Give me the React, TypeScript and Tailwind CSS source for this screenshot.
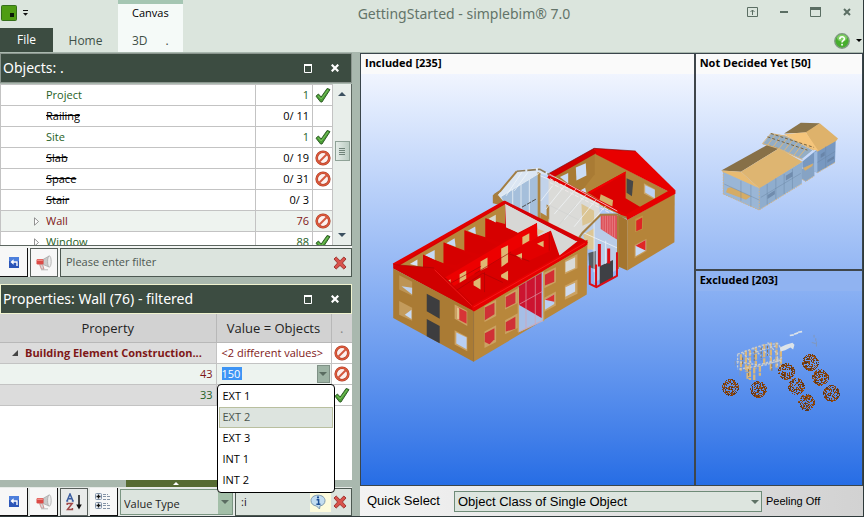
import React, { useState } from "react";

const ui = "font-['Open_Sans','Noto_Sans',sans-serif]";

/* ---------- icons ---------- */

function CheckIcon() {
  return (
    <svg viewBox="0 0 16 16" className="mx-auto block size-4" aria-label="Included" role="img">
      <path d="M1 9.2 3.4 7l2.8 3L12.2 1.4 15 2.6 7 15H5.6Z" fill="#4b9e35" stroke="#2f5c27" strokeWidth="1" strokeLinejoin="round" />
      <path d="M3.2 8.8 6.2 12 13 3" fill="none" stroke="#79c45c" strokeWidth="1" />
    </svg>
  );
}

function BanIcon() {
  return (
    <svg viewBox="0 0 16 16" className="mx-auto block size-4" aria-label="Excluded" role="img">
      <circle cx="8" cy="8" r="6.3" fill="#fdf1ee" stroke="#a83a22" strokeWidth="2.6" />
      <circle cx="8" cy="8" r="6.3" fill="none" stroke="#dd5a3d" strokeWidth="1.6" />
      <path d="m4 12 8-8" stroke="#d3583e" strokeWidth="2" />
    </svg>
  );
}

function RedX() {
  return (
    <svg viewBox="0 0 14 14" className="block size-3.5" aria-hidden="true">
      <path d="M1 3 3.2 1 7 4.8 10.8 1 13 3 9.4 7l3.6 4-2.2 2L7 9.4 3.2 13 1 11l3.6-4Z" fill="#d9534c" stroke="#a03631" strokeWidth="1" strokeLinejoin="round" />
    </svg>
  );
}

function BackIcon() {
  return (
    <svg viewBox="0 0 10 11" className="block h-[11px] w-2.5" aria-hidden="true">
      <rect width="10" height="11" fill="#2c55b8" />
      <rect x="0" y="0" width="10" height="4" fill="#4d7fdc" />
      <path d="M8 9V5H4" fill="none" stroke="#fff" strokeWidth="1.4" />
      <path d="M1.4 5 4.6 2.2v5.6Z" fill="#fff" />
    </svg>
  );
}

function Megaphone() {
  return (
    <svg viewBox="0 0 16 16" className="block size-4" aria-hidden="true">
      <path d="M7 4.5 13 1v11L7 9.5Z" fill="#c9c9c9" stroke="#9a9a9a" strokeWidth=".6" />
      <ellipse cx="13.4" cy="6.5" rx="1.8" ry="5.6" fill="#ededed" stroke="#a2a2a2" strokeWidth=".7" />
      <rect x=".5" y="4" width="7" height="5.6" rx="1.4" fill="#dc4a46" />
      <rect x="1" y="4.4" width="6" height="1.6" rx=".8" fill="#f08a84" />
      <path d="M3.6 9.6h3l1.4 4.6H5.4Z" fill="#d8d8d8" stroke="#c0605c" strokeWidth=".6" />
      <path d="M5 14.8h7" stroke="#b9b9b9" strokeWidth="1" />
    </svg>
  );
}

function SortIcon() {
  return (
    <svg viewBox="0 0 16 18" className="block h-[18px] w-4" aria-hidden="true">
      <path d="M1 8 4 1l3 7M2 5.800h4M.2 8h2M5.800 8h2" fill="none" stroke="#3b5da0" strokeWidth="1.5" />
      <path d="M1.2 12v-1.600h5L1.400 16.600h5V15" fill="none" stroke="#a04848" strokeWidth="1.5" />
      <path d="M13 2v11" stroke="#111" strokeWidth="1.500" />
      <path d="M10.200 11.500h5.600L13 16.400Z" fill="#111" />
    </svg>
  );
}

function TreeIcon() {
  return (
    <svg viewBox="0 0 17 18" className="block h-[18px] w-[17px]" aria-hidden="true">
      {[1, 10].map((y) => (
        <g key={y}>
          <rect x=".5" y={y - 0.5} width="6" height="6" rx="1" fill="#eef3fa" stroke="#8091a8" />
          <path d={`M1.5 ${y + 2.5}h4M3.5 ${y + 0.5}v4`} stroke="#111" strokeWidth="1.300" />
          <path d={`M8 ${y + 0.5}h5M8 ${y + 2.5}h8M8 ${y + 5.5}h8`} stroke="#8492a5" strokeDasharray="3 1" />
        </g>
      ))}
    </svg>
  );
}

function InfoIcon() {
  return (
    <svg viewBox="0 0 16 16" className="block size-4" aria-hidden="true">
      <path d="M8 1.200c4 0 7 2.200 7 5.400 0 2.800-1.800 4.800-5 5.300L9.500 15 6.500 12C3 11.500 1 9.600 1 6.600 1 3.400 4 1.200 8 1.200Z" fill="#c3ddf0" stroke="#7c98ad" />
      <path d="M6.600 5.800h2v4.200M6.400 10.200h4" fill="none" stroke="#1d4f94" strokeWidth="1.500" />
      <circle cx="8" cy="3.400" r="1.100" fill="#1d4f94" />
    </svg>
  );
}

function HelpIcon() {
  return (
    <svg viewBox="0 0 16 16" className="block size-4" aria-hidden="true">
      <circle cx="8" cy="8" r="7.200" fill="#47ae2e" stroke="#7e9a80" strokeWidth="1.400" />
      <ellipse cx="8" cy="5" rx="5" ry="3.400" fill="#7fd062" />
      <path d="M5.800 6.200c0-3.200 4.600-3 4.600-.4C10.400 7.600 8 7.600 8 9.400" fill="none" stroke="#fff" strokeWidth="1.600" />
      <rect x="7.200" y="10.800" width="1.700" height="1.700" fill="#fff" />
    </svg>
  );
}

function Triangle({ className }: { className: string }) {
  return (
    <svg viewBox="0 0 8 4" className={`block h-1 w-2 ${className}`} aria-hidden="true">
      <path d="M0 0h8L4 4Z" fill="currentColor" />
    </svg>
  );
}

/* ---------- header ---------- */

function Header() {
  return (
    <header className="flex h-[53px] shrink-0 border-b border-[#a9b8ae] bg-[#dbe5dd]">
      <div className="flex w-[118px] shrink-0 flex-col justify-between">
        <div className="flex h-[26px] items-center gap-1.5 pl-px">
          <svg viewBox="0 0 16 16" className="size-4" aria-label="simplebim" role="img">
            <rect x=".5" y=".5" width="15" height="15" rx="1" fill="#4f9d13" stroke="#35701a" />
            <rect x="9" y="8" width="4" height="4" fill="#0b1a05" />
          </svg>
          <button aria-label="Customize quick access" className="p-0">
            <svg viewBox="0 0 5 6" className="h-1.5 w-[5px]">
              <path d="M0 .5h5" stroke="#111" />
              <path d="M0 3h5L2.500 5.800Z" fill="#111" />
            </svg>
          </button>
        </div>
        <nav className="flex h-6 text-xs">
          <button className="w-[53px] bg-[#3c4c41] text-xs text-white">File</button>
          <button className="w-[65px] pt-0.5 text-xs text-[#3f5047]">Home</button>
        </nav>
      </div>
      <div className="flex w-[65px] shrink-0 flex-col justify-between border-t-4 border-[#a5c6b3] bg-[#f5faf8] pb-px pl-3.5">
        <span className="text-[11px] leading-[18px] text-black">Canvas</span>
        <button className="flex gap-[18px] text-xs leading-5 text-[#3f5047]">
          <span>3D</span>
          <span>.</span>
        </button>
      </div>
      <h1 className="flex-1 pt-0.5 text-center font-['Noto_Sans',sans-serif] text-sm leading-6 text-[#637469]">GettingStarted - simplebim® 7.0</h1>
      <div className="flex w-[118px] shrink-0 flex-col items-end text-[#5b6e63]">
        <div className="flex h-[26px] items-center gap-[22px] pr-3">
          <button aria-label="Ribbon display options">
            <svg viewBox="0 0 11 10" className="h-2.5 w-[11px]" fill="none" stroke="currentColor">
              <path d="M.5.500h10v9H.500ZM5.500 8V3M3.500 5l2-2 2 2" />
            </svg>
          </button>
          <button aria-label="Minimize"><svg viewBox="0 0 8 10" className="h-2.5 w-2"><rect y="4" width="8" height="2" fill="currentColor" /></svg></button>
          <button aria-label="Maximize">
            <svg viewBox="0 0 11 10" className="h-2.5 w-[11px]"><path d="M.5.500h10v9H.500Z" fill="none" stroke="currentColor" /><rect width="11" height="3" fill="currentColor" /></svg>
          </button>
          <button aria-label="Close"><svg viewBox="0 0 8 8" className="size-2"><path d="m1 1 6 6M7 1 1 7" stroke="currentColor" strokeWidth="2" /></svg></button>
        </div>
        <button aria-label="Help" className="flex h-[30px] items-center gap-1.5 pr-px pt-1.5 text-black">
          <HelpIcon />
          <svg viewBox="0 0 6 3" className="h-[3px] w-1.5"><path d="M0 0h6L3 3Z" fill="currentColor" /></svg>
        </button>
      </div>
    </header>
  );
}

/* ---------- docked panels ---------- */

function PanelTitle({ children, border }: { children: React.ReactNode; border: string }) {
  return (
    <div className={`flex h-[30px] shrink-0 items-center border bg-[#3c4c41] pl-0.5 pr-3 text-white ${border}`}>
      <h2 className="flex-1 font-['Noto_Sans',sans-serif] text-sm">{children}</h2>
      <button aria-label="Maximize panel" className="mr-[19px]">
        <svg viewBox="0 0 8 9" className="h-[9px] w-2"><path d="M.5 1h7v7.500h-7Z" fill="none" stroke="#fff" /><rect width="8" height="2" fill="#fff" /></svg>
      </button>
      <button aria-label="Close panel">
        <svg viewBox="0 0 8 8" className="size-2"><path d="m.7.700 6.600 6.600M7.300.700.700 7.300" stroke="#fff" strokeWidth="2.200" /></svg>
      </button>
    </div>
  );
}

const objects = [
  { name: "Project", count: "1", state: "in" },
  { name: "Railing", count: "0/ 11", state: "none" },
  { name: "Site", count: "1", state: "in" },
  { name: "Slab", count: "0/ 19", state: "out" },
  { name: "Space", count: "0/ 31", state: "out" },
  { name: "Stair", count: "0/ 3", state: "none" },
  { name: "Wall", count: "76", state: "selected" },
  { name: "Window", count: "88", state: "in", tree: true },
];

const rowTone: Record<string, string> = {
  in: "text-[#1f6126]",
  none: "text-black",
  out: "text-black",
  selected: "bg-[#eef3ef] text-[#7e1717]",
};

function ObjectsPanel() {
  return (
    <section className="flex shrink-0 flex-col">
      <PanelTitle border="border-[#8b958e]">Objects: .</PanelTitle>
      <div className="mt-px flex h-[162px] overflow-hidden border-b border-r border-[#5c6660] bg-white">
        <div className="flex-1 overflow-hidden">
          <table className="w-full table-fixed border-collapse text-[11px] leading-4">
            <colgroup>
              <col />
              <col className="w-[57px]" />
              <col className="w-5" />
            </colgroup>
            <tbody>
              {objects.map((o) => {
                const struck = o.state === "none" || o.state === "out";
                return (
                  <tr key={o.name} className={`h-[21px] ${rowTone[o.state]}`}>
                    <td className="border border-[#c3c3c3] p-0">
                      <div className="flex items-center">
                        <span className="flex w-[45px] justify-end pr-[7px]">
                          {(o.state === "selected" || o.tree) && (
                            <svg viewBox="0 0 5 9" className="h-[9px] w-[5px]" aria-hidden="true">
                              <path d="M.5.800v7.400l4-3.700Z" fill="#fff" stroke="#777" strokeWidth=".8" />
                            </svg>
                          )}
                        </span>
                        <span className={struck ? "line-through" : ""}>{o.name}</span>
                      </div>
                    </td>
                    <td className="border border-[#c3c3c3] p-0 pr-[3px] text-right">{o.count}</td>
                    <td className="border border-[#c3c3c3] p-0">
                      {o.state === "in" && <CheckIcon />}
                      {(o.state === "out" || o.state === "selected") && <BanIcon />}
                    </td>
                  </tr>
                );
              })}
            </tbody>
          </table>
        </div>
        <div className="flex w-[18px] flex-col items-center bg-[#e8eeea] py-2 text-[#3c5060]">
          <Triangle className="rotate-180" />
          <div className="mt-[45px] flex h-5 w-[15px] flex-col items-center justify-center gap-px border border-[#8fa297] bg-linear-to-r from-[#e4ece7] to-[#bccdc3]">
            {[0, 1, 2, 3].map((i) => (
              <i key={i} className="h-px w-1.5 bg-[#708379]" />
            ))}
          </div>
          <Triangle className="mt-auto" />
        </div>
      </div>
      <div className="flex h-[31px] items-stretch gap-0.5 bg-[#f4f6f4] pt-0.5">
        <ToolButton label="Back" raised><BackIcon /></ToolButton>
        <ToolButton label="Announce"><Megaphone /></ToolButton>
        <div className="flex flex-1 items-center border border-[#4c5851] bg-[#dce4de] pl-[5px] pr-1">
          <input
            aria-label="Object filter"
            placeholder="Please enter filter"
            className="min-w-0 flex-1 bg-transparent text-[11px] text-[#333] outline-none placeholder:text-[#4d5751]"
          />
          <button aria-label="Clear filter"><RedX /></button>
        </div>
      </div>
    </section>
  );
}

function ToolButton({ label, raised, pressed, children }: { label: string; raised?: boolean; pressed?: boolean; children: React.ReactNode }) {
  const edge = raised ? "border-b border-r border-[#111]" : "border border-[#59605c]";
  return (
    <button aria-label={label} className={`flex w-7 shrink-0 items-center justify-center ${edge} ${pressed ? "bg-[#e9ebea]" : "bg-[#f7f7f7]"}`}>
      {children}
    </button>
  );
}

const choices = ["EXT 1", "EXT 2", "EXT 3", "INT 1", "INT 2"];

function PropertiesPanel() {
  const [value, setValue] = useState("150");
  const [filter, setFilter] = useState(":i");
  return (
    <section className="mt-[7px] flex min-h-0 flex-1 flex-col">
      <PanelTitle border="border-[#f0f3cf]">Properties: Wall (76) - filtered</PanelTitle>
      <div className="flex-1 bg-white">
        <table className="w-full table-fixed border-collapse text-[11px] leading-4">
          <colgroup>
            <col />
            <col className="w-[115px]" />
            <col className="w-[21px]" />
          </colgroup>
          <thead>
            <tr className="h-7 bg-[#d2d2d2] text-[13px] text-[#222]">
              <th className="border-b border-r border-[#b8b8b8] p-0 font-normal">Property</th>
              <th className="border-b border-r border-[#b8b8b8] p-0 font-normal">Value = Objects</th>
              <th className="border-b border-[#b8b8b8] p-0 font-normal text-[#888]">.</th>
            </tr>
          </thead>
          <tbody>
            <tr className="h-[21px] text-[#7e1717]">
              <td className="border-b border-r border-[#c3c3c3] bg-[#dcdcdc] p-0 font-bold">
                <div className="flex items-center gap-[7px] pl-3">
                  <svg viewBox="0 0 6 6" className="size-1.5" aria-hidden="true"><path d="M6 0v6H0Z" fill="#444" /></svg>
                  <span>Building Element Construction...</span>
                </div>
              </td>
              <td className="border-b border-r border-[#c3c3c3] p-0 pl-[5px] whitespace-nowrap">&lt;2 different values&gt;</td>
              <td className="border-b border-[#c3c3c3] p-0"><BanIcon /></td>
            </tr>
            <tr className="h-[21px] bg-[#edf3ef] text-[#7e1717]">
              <td className="border-b border-r border-[#c3c3c3] p-0 pr-[3px] text-right">43</td>
              <td className="border-b border-r border-[#c3c3c3] p-0">
                <div className="relative flex h-5 items-center justify-between pl-[5px] pr-px">
                  <input
                    aria-label="Property value"
                    value={value}
                    onChange={(e) => setValue(e.target.value)}
                    className="h-[13px] w-5 bg-[#3d94f5] p-0 text-[11px] text-white outline-none"
                  />
                  <button aria-label="Show values" className="flex h-[18px] w-[13px] items-center justify-center border border-[#7f9186] bg-[#9db3a4] text-[#5a6c61]">
                    <Triangle className="" />
                  </button>
                  <ul role="listbox" aria-label="Values" className="absolute top-full left-0 z-10 h-[109px] w-[118px] rounded-sm border border-black bg-white p-px text-black">
                    {choices.map((c) => (
                      <li key={c} role="option" aria-selected={c === "EXT 2"}>
                        <button
                          onClick={() => setValue(c)}
                          className={`block h-[21px] w-full border pl-[3px] text-left ${c === "EXT 2" ? "border-[#b9bf9f] bg-[#dde4df] text-[#4a554e]" : "border-transparent"}`}
                        >
                          {c}
                        </button>
                      </li>
                    ))}
                  </ul>
                </div>
              </td>
              <td className="border-b border-[#c3c3c3] bg-white p-0"><BanIcon /></td>
            </tr>
            <tr className="h-[21px] text-[#1f6126]">
              <td className="border-b border-r border-[#c3c3c3] bg-[#dcdcdc] p-0 pr-[3px] text-right">33</td>
              <td className="border-b border-r border-[#c3c3c3] p-0" />
              <td className="border-b border-[#c3c3c3] p-0"><CheckIcon /></td>
            </tr>
          </tbody>
        </table>
      </div>
      <div className="flex h-[7px] shrink-0 justify-center">
        <button aria-label="Expand details" className="flex w-[101px] items-center justify-center bg-[#566b32]">
          <svg viewBox="0 0 6 3" className="h-[3px] w-1.5"><path d="M0 3h6L3 0Z" fill="#fff" /></svg>
        </button>
      </div>
      <div className="flex h-[29px] shrink-0 items-stretch gap-0.5 bg-[#e6eae7] pt-px">
        <ToolButton label="Back" raised><BackIcon /></ToolButton>
        <ToolButton label="Announce" raised><Megaphone /></ToolButton>
        <ToolButton label="Sort" pressed><SortIcon /></ToolButton>
        <ToolButton label="Group" raised><TreeIcon /></ToolButton>
        <div className="relative my-px w-[113px] border border-[#7a9582] bg-[#dce4de]">
          <select aria-label="Filter field" className="h-full w-full appearance-none bg-transparent pl-[3px] pb-1 text-[11px] text-[#1d1d1d] outline-none">
            <option>Value Type</option>
          </select>
          <span className="pointer-events-none absolute inset-y-0 right-0 flex w-3.5 items-center justify-center bg-[#a3bfa8] text-[#5a6c61]">
            <Triangle className="" />
          </span>
        </div>
        <div className="flex min-w-0 flex-1 items-center border border-[#4c5851] bg-[#dce4de] pr-1 pl-[5px]">
          <input
            aria-label="Property filter"
            value={filter}
            onChange={(e) => setFilter(e.target.value)}
            className="min-w-0 flex-1 bg-transparent text-[11px] text-[#201020] outline-none"
          />
          <button aria-label="Filter help" className="flex h-5 w-[21px] items-center bg-[#fdfbdc]"><InfoIcon /></button>
          <button aria-label="Clear property filter" className="ml-0.5"><RedX /></button>
        </div>
      </div>
    </section>
  );
}

/* ---------- 3D views ---------- */

type Shape = [string, string];

function Shapes({ items }: { items: Shape[] }) {
  return (
    <>
      {items.map(([points, fill], i) => (
        <polygon key={i} points={points} fill={fill} />
      ))}
    </>
  );
}

const rearWing: Shape[] = [
  ["75,105 197,36 425,155 295,230 200,190 75,118", "#b2843a"],
  ["75,105 197,36 197,100 150,160 75,118", "#a97b34"],
  ["140,80 170,67 172,104 142,119", "#cbdcf5"],
  ["92,108 117,96 117,128", "#cbdcf5"],
  ["152,150 168,141 172,156", "#cbdcf5"],
  ["345,127 378,145 378,176 345,158", "#c9a871"],
  ["349,133 378,147 378,172 349,155", "#bcd1f3"],
  ["290,92 290,172 337,200 337,210 295,228 175,155", "#dc0000"],
  ["175,155 290,92 290,97 182,159", "#f00000"],
  ["215,160 252,178 250,198 210,185", "#d6b069"],
  ["293,112 313,121 309,166 293,156", "#474747"],
  ["195,22 320,30 440,148 425,155 200,40", "#e80000"],
  ["55,100 195,22 203,36 75,108", "#d20000"],
  ["268,222 295,238 295,390 268,378", "#a4752f"],
  ["295,238 438,157 437,305 295,390", "#b58439"],
  ["290,222 425,147 440,148 440,159 295,238", "#e60000"],
  ["319,235 342,224 341,266 319,275", "#c49347"],
  ["322,240 340,230 339,264 322,272", "#de2424"],
  ["317,313 353,294 353,332 317,353", "#c79c5a"],
  ["320,315 350,298 350,330 320,347", "#c7daf5"],
  ["320,315 350,298 350,330", "#e02525"],
];

const atrium: Shape[] = [
  ["70,148 88,138 106,170 95,178 70,172", "#a87d3c"],
  ["86,148 145,75 210,65 240,88 215,84 105,170", "#dbe6f3"],
  ["95,152 205,84 205,226 105,172", "#a5bfdb"],
  ["205,78 214,82 214,225 205,220", "#ad8744"],
  ["214,86 240,98 240,215 214,200", "#c2d3ea"],
  ["214,200 240,215 240,240 214,225", "#b2843a"],
  ["238,92 392,172 392,210 330,276 320,282 238,238", "#dbdbd8"],
  ["232,176 240,180 240,222 232,214", "#ab8340"],
  ["337,174 375,195 375,225 340,240", "#dbc594"],
  ["330,276 395,208 445,210 445,372 375,412 375,320 356,300", "#b9cce8"],
  ["342,268 375,248 375,312 356,312", "#dcc695"],
  ["395,208 445,208 445,282 395,250", "#dc5058"],
  ["358,322 380,316 380,372 360,364", "#565b61"],
  ["392,362 432,343 432,398 392,418", "#3e4045"],
];

const frontWing: Shape[] = [
  ["25,372 362,180 605,300 605,330 267,512", "#d80000"],
  ["45,374 362,190 362,250 303,234 303,290 240,270 240,330 177,306 177,368 115,345 115,380 45,378", "#b7873b"],
  ["75,370 98,357 98,376", "#d6e3f5"],
  ["120,344 150,328 150,358", "#c6d9f5"],
  ["185,308 210,293 213,318", "#c6d9f5"],
  ["250,270 272,257 274,281", "#c6d9f5"],
  ["312,234 334,222 334,246", "#d8d8cc"],
  ["362,188 580,302 526,345 500,270 460,288 458,247 400,277 365,262", "#d7d7d5"],
  ["460,265 480,272 460,284", "#dfc594"],
  ["303,232 400,276 345,305 303,290", "#d60000"],
  ["240,268 335,313 285,342 240,330", "#d60000"],
  ["177,305 265,347 215,374 177,368", "#d60000"],
  ["115,342 210,386 180,410 115,382", "#d60000"],
  ["180,412 458,247 458,292 270,400 205,438", "#ed0000"],
  ["375,335 500,270 500,330 435,360", "#e20000"],
  ["350,324 371,314 371,365 351,379", "#dfb872"],
  ["414,289 435,278 435,300 414,312", "#dfb872"],
  ["288,363 309,351 309,380 288,391", "#dfb872"],
  ["225,401 245,390 245,415 225,427", "#dfb872"],
  ["267,423 288,411 288,447 267,434", "#dfb872"],
  ["350,403 371,391 371,420 350,410", "#dfb872"],
  ["395,345 413,337 413,357", "#dfb872"],
  ["458,309 478,300 478,320", "#dfb872"],
  ["190,420 198,416 198,432", "#dfb872"],
  ["25,372 148,382 182,412 267,492 267,514 25,384", "#d00000"],
  ["25,384 267,512 267,665 25,533", "#aa7b34"],
  ["267,512 610,312 608,462 267,665", "#b8873b"],
  ["260,497 610,297 610,312 267,514", "#e60000"],
  ["43,404 82,424 82,466 43,447", "#bd9454"],
  ["50,437 82,442 82,462", "#bdd0ed"],
  ["43,482 82,502 82,541 43,523", "#c39b5c"],
  ["60,523 80,508 80,536", "#c7daf5"],
  ["126,460 165,480 165,535 126,513", "#3d3d3f"],
  ["126,536 165,557 165,609 126,588", "#3d3d3f"],
  ["210,492 248,512 248,557 210,535", "#cba263"],
  ["217,500 246,514 246,550 217,535", "#d73436"],
  ["217,500 224,504 224,538 217,535", "#e0c68f"],
  ["210,570 248,590 248,633 210,613", "#cba263"],
  ["215,577 246,592 246,627 215,610", "#b9cff3"],
  ["300,497 335,478 335,527 300,545", "#cba263"],
  ["301,501 330,487 330,522 301,540", "#d03036"],
  ["300,574 335,555 335,605 300,623", "#cba263"],
  ["301,579 330,564 330,597 315,612 301,605", "#d03036"],
  ["362,466 400,444 400,488 362,507", "#cba263"],
  ["364,470 393,454 393,488 364,502", "#d03036"],
  ["362,540 400,519 400,563 362,582", "#cba263"],
  ["364,546 393,529 393,565 364,574", "#d03036"],
  ["402,438 478,393 478,542 402,577", "#a6bee6"],
  ["402,438 472,397 472,533 402,492", "#cc1430"],
  ["480,397 515,380 515,425 480,443", "#cba263"],
  ["482,403 510,388 510,424 482,435", "#d42d32"],
  ["480,472 515,453 515,495 480,514", "#cba263"],
  ["482,478 510,462 510,491 482,508", "#b9cff3"],
  ["482,478 510,462 510,484", "#dc3030"],
  ["542,360 580,340 580,383 542,401", "#cba263"],
  ["544,364 573,350 573,382 544,395", "#d9dbd8"],
  ["542,436 580,417 580,460 542,478", "#cba263"],
  ["544,440 573,427 573,453 544,469", "#cddaf0"],
];

function IncludedModel() {
  return (
    <svg viewBox="361 73 334 412" className="min-h-0 w-full flex-1" role="img" aria-label="Included building model">
      <g transform="translate(530 140) scale(.33333)">
        <Shapes items={rearWing} />
        <path d="M55 100 195 22 320 30" fill="none" stroke="#7d0d0d" strokeWidth="2" />
      </g>
      <g transform="translate(470 145) scale(.33333)">
        <Shapes items={atrium} />
        <path d="m236 92 54 24 156 80 30 18" fill="none" stroke="#e30000" strokeWidth="10" />
        <g fill="none" stroke="#f1f5f8" strokeWidth="3" opacity=".75">
          <path d="m86 148 59-73 65-7 235 128M95 152l115-70M130 130v55M155 115v82M180 100v110M110 150l50-75M135 135l45-62M214 90l25 10M250 120l-35 45M290 115l-60 75M320 130l-65 75M350 147l-65 75M380 163l-65 80M410 180l-55 65M345 262l100 45M375 230v150M410 285v70" />
        </g>
        <path d="M242 110 420 200M242 98l190 102" fill="none" stroke="#f0e9e9" strokeWidth="3" strokeDasharray="12 5" />
        <path d="M240 238v-60l90 45M260 248l60-70" fill="none" stroke="#c6c8c8" strokeWidth="1" />
        <path d="m74 148 18-12 50-60M330 276l10-14 55-55 48-1 30 10M330 276l26 16" fill="none" stroke="#a37e42" strokeWidth="6" />
        <path d="M142 76 212 70 240 86" fill="none" stroke="#8c7a58" strokeWidth="5" strokeDasharray="26 6" />
        <path d="m158 184 42-24" stroke="#4d4d4d" strokeWidth="3" strokeDasharray="14 3" />
        <path d="M402 210v44M409 210v48M416 210v52M423 210v58M430 210v62M437 210v66" stroke="#ef9298" strokeWidth="2" />
        <path d="M447 210v160" stroke="#a87c38" strokeWidth="6" />
        <path d="M362 360v55l20 10 62-34M381 357v68M444 320v73" fill="none" stroke="#dc0c14" strokeWidth="6" />
        <path d="M391 295v68M419 309v45" stroke="#dc0c14" strokeWidth="9" />
      </g>
      <g transform="translate(385 140) scale(.33333)">
        <Shapes items={frontWing} />
        <path d="m26 373 336-190" fill="none" stroke="#e20000" strokeWidth="9" />
        <path d="m360 184 218 115" fill="none" stroke="#d4000a" strokeWidth="6" />
        <path d="m26 372 122 10M180 412l20 15 90-50M270 400l110-66M215 450l80-52 60 28M300 395v60M375 340l60 22M495 275v55" fill="none" stroke="#a80505" strokeWidth="2" />
        <path d="m150 388 112 108M267 500l335-192" fill="none" stroke="#ff2525" strokeWidth="2" />
        <path d="M267 514v150" stroke="#94692b" strokeWidth="2" />
        <path d="M425 425v140M453 408v145M404 492l72-40M404 574l72-34" fill="none" stroke="#dba0ad" strokeWidth="2" />
        <path d="M478 393v150M402 440v135" stroke="#c8a369" strokeWidth="4" />
      </g>
    </svg>
  );
}

const undecided: Shape[] = [
  ["72,212 178,262 310,182 308,248 180,328 72,280", "#8fadce"],
  ["72,212 180,262 180,328 72,280", "#9ab6d6"],
  ["310,182 350,150 410,118 408,185 355,216 310,200", "#7898c0"],
  ["308,205 346,185 346,225 320,242 308,235", "#86a3c4"],
  ["345,155 355,150 355,216 345,212", "#9bb9de"],
  ["85,262 95,260 155,287 140,297 80,275", "#d5ac66"],
  ["190,130 215,98 260,105 340,148 308,175 240,145", "#94adc4"],
  ["255,98 305,66 362,67 325,95", "#8a744a"],
  ["362,67 417,113 412,120 355,153 320,94", "#deb26b"],
  ["255,100 320,94 358,150 335,145", "#f5c57b"],
  ["66,209 205,132 240,142 125,213", "#877048"],
  ["125,213 240,142 310,183 180,263", "#deb571"],
  ["66,209 125,213 180,263 70,213", "#e8bb72"],
  ["312,202 342,188 340,196 318,210", "#d7ad69"],
];

function UndecidedModel() {
  return (
    <svg viewBox="697 73 166 195" className="min-h-0 w-full flex-1" role="img" aria-label="Undecided building model">
      <g transform="translate(700 100) scale(.33333)">
        <Shapes items={undecided} />
        <g fill="none" stroke="#d9b77f" strokeWidth="3">
          <path d="M190 128 215 98l45 8 85 42M190 128l50 16 70 32M205 133l25-33M222 138l25-35M240 143l25-33M255 150l25-33M270 156l25-31M285 163l22-30M298 170l25-30" />
        </g>
        <path d="m215 98 130 42M205 108l120 40" fill="none" stroke="#78633f" strokeWidth="3" strokeDasharray="9 6" />
        <path d="m72 280 108 48 130-80M72 212v68M180 262v66M355 216l53-31M310 236l10 6 26-16" fill="none" stroke="#d2b487" strokeWidth="3" strokeDasharray="5 3" />
        <path d="M125 240v60M155 252v65M204 250v62M230 233v62M255 220v60M280 205v58M185 290l120-72M75 250l105 48M380 137v64M355 185l53-33" fill="none" stroke="#66809f" strokeWidth="2" opacity=".6" />
        <path d="m205 283 22-14v12l-22 14ZM260 225l20-12v14l-20 12ZM365 160l12-8v12l-12 8ZM385 178l20-12v8l-20 12Z" fill="#637e9f" opacity=".7" />
      </g>
    </svg>
  );
}

const trees = [
  [92, 228], [175, 236], [262, 181], [334, 154], [364, 199], [291, 225], [322, 274], [397, 248],
];

/* Repeatable scatter of cells, so every render draws the same foliage. */
function foliage(seed: number) {
  const cells: { x: number; y: number; fill: string }[] = [];
  const noise = (n: number) => {
    const v = Math.sin(n * 12.9898 + seed * 78.233) * 43758.5453;
    return v - Math.floor(v);
  };
  const palette = ["#84400f", "#8f460f", "#74390e", "#55351c", "#98500f"];
  let n = 1;
  for (let y = -24; y <= 24; y += 3) {
    for (let x = -24; x <= 24; x += 3) {
      n += 1;
      const r = Math.hypot(x, y);
      const density = r > 17 ? 0.7 : 0.52;
      if (r <= 25 && noise(n) < density) cells.push({ x, y, fill: palette[Math.floor(noise(n + 500) * 5)] });
    }
  }
  return cells;
}

function ExcludedModel() {
  return (
    <svg viewBox="697 290 166 195" className="min-h-0 w-full flex-1" role="img" aria-label="Excluded objects">
      <g transform="translate(700 310) scale(.33333)">
        <g fill="none">
          <path d="M125 130v50M140 118v65M152 118v90M170 108v65M195 100v60M215 95v85M232 95v75M145 165v42M165 170v38M182 165v30M245 120v50" stroke="#d9b67a" strokeWidth="7" strokeDasharray="18 3" />
          <path d="m115 130 75-27 45-5 15 20M112 152l60 10 75-12M120 175l30-5 50-8 45-15M115 130v45M160 110l30 30M180 105l35 35M205 95l30 35M130 125l30 35M150 130l80-25M190 160l60-20M235 125v45" stroke="#c8cdd2" strokeWidth="4" strokeDasharray="7 4" />
          <path d="M130 140v22M165 120v30M186 110v38M205 105v30M148 175v25M218 160v20" stroke="#8d7450" strokeWidth="3" strokeDasharray="8 4" />
          <path d="m272 74 12-2M285 70l12-4M297 64l12-2" stroke="#dce3e9" strokeWidth="5" />
          <path d="m242 110 18-8 20-6 6 6-4 14-8-6-16 8-14 4Z" fill="#dce3e9" />
          <path d="M345 72v8M350 82v8M352 92v15M338 95l12 3M108 150v15M122 180v15" stroke="#8297b9" strokeWidth="3" />
        </g>
        {trees.map(([cx, cy], i) => (
          <g key={i} transform={`translate(${cx} ${cy})`} shapeRendering="crispEdges">
            {foliage(i + 1).map((c, j) => (
              <rect key={j} x={c.x} y={c.y} width="3" height="3" fill={c.fill} />
            ))}
          </g>
        ))}
      </g>
    </svg>
  );
}

function ViewLabel({ tint, children }: { tint: string; children: React.ReactNode }) {
  return <h3 className={`h-5 shrink-0 pl-1 text-[11px] leading-[18px] font-bold text-black ${tint}`}>{children}</h3>;
}

function Canvas() {
  return (
    <main className="flex min-w-0 flex-1 flex-col">
      <div className="flex min-h-0 flex-1 border border-[#3a454b] bg-linear-to-b from-[#fafbff] via-[#94b7f4] to-[#266de5]">
        <section className="flex min-w-0 flex-2 flex-col border-r-2 border-[#3f464b]">
          <ViewLabel tint="bg-[#fafafa]">Included [235]</ViewLabel>
          <IncludedModel />
        </section>
        <div className="flex min-w-0 flex-1 flex-col">
          <section className="flex min-h-0 flex-1 flex-col border-b-2 border-[#3f464b]">
            <ViewLabel tint="bg-[#fafafa]">Not Decided Yet [50]</ViewLabel>
            <UndecidedModel />
          </section>
          <section className="flex min-h-0 flex-1 flex-col">
            <ViewLabel tint="bg-[#90b3f1]">Excluded [203]</ViewLabel>
            <ExcludedModel />
          </section>
        </div>
      </div>
      <div className="flex h-[30px] shrink-0 items-center bg-linear-to-r from-[#f3f3f3] to-[#d2d2d2] pl-[7px] font-['Liberation_Sans',Arial,sans-serif] text-black">
        <label htmlFor="quick-select" className="w-[87px] text-[13px]">Quick Select</label>
        <div className="relative min-w-0 flex-1">
          <select id="quick-select" className="block h-[21px] w-full appearance-none border border-[#6f8b78] bg-[#dde5df] pl-[3px] text-[13px] outline-none">
            <option>Object Class of Single Object</option>
          </select>
          <Triangle className="pointer-events-none absolute top-[9px] right-[3px] text-[#5f7266]" />
        </div>
        <button className="w-[101px] pl-1 text-left text-[11px]">Peeling Off</button>
      </div>
    </main>
  );
}

export default function App() {
  return (
    <div className={`flex h-screen min-h-[480px] flex-col border-r border-b border-[#2f3a3b] bg-[#a9b8ae] ${ui}`}>
      <Header />
      <div className="flex min-h-0 flex-1">
        <aside className="flex w-88 shrink-0 flex-col">
          <ObjectsPanel />
          <PropertiesPanel />
        </aside>
        <div className="w-2 shrink-0" />
        <Canvas />
      </div>
    </div>
  );
}
